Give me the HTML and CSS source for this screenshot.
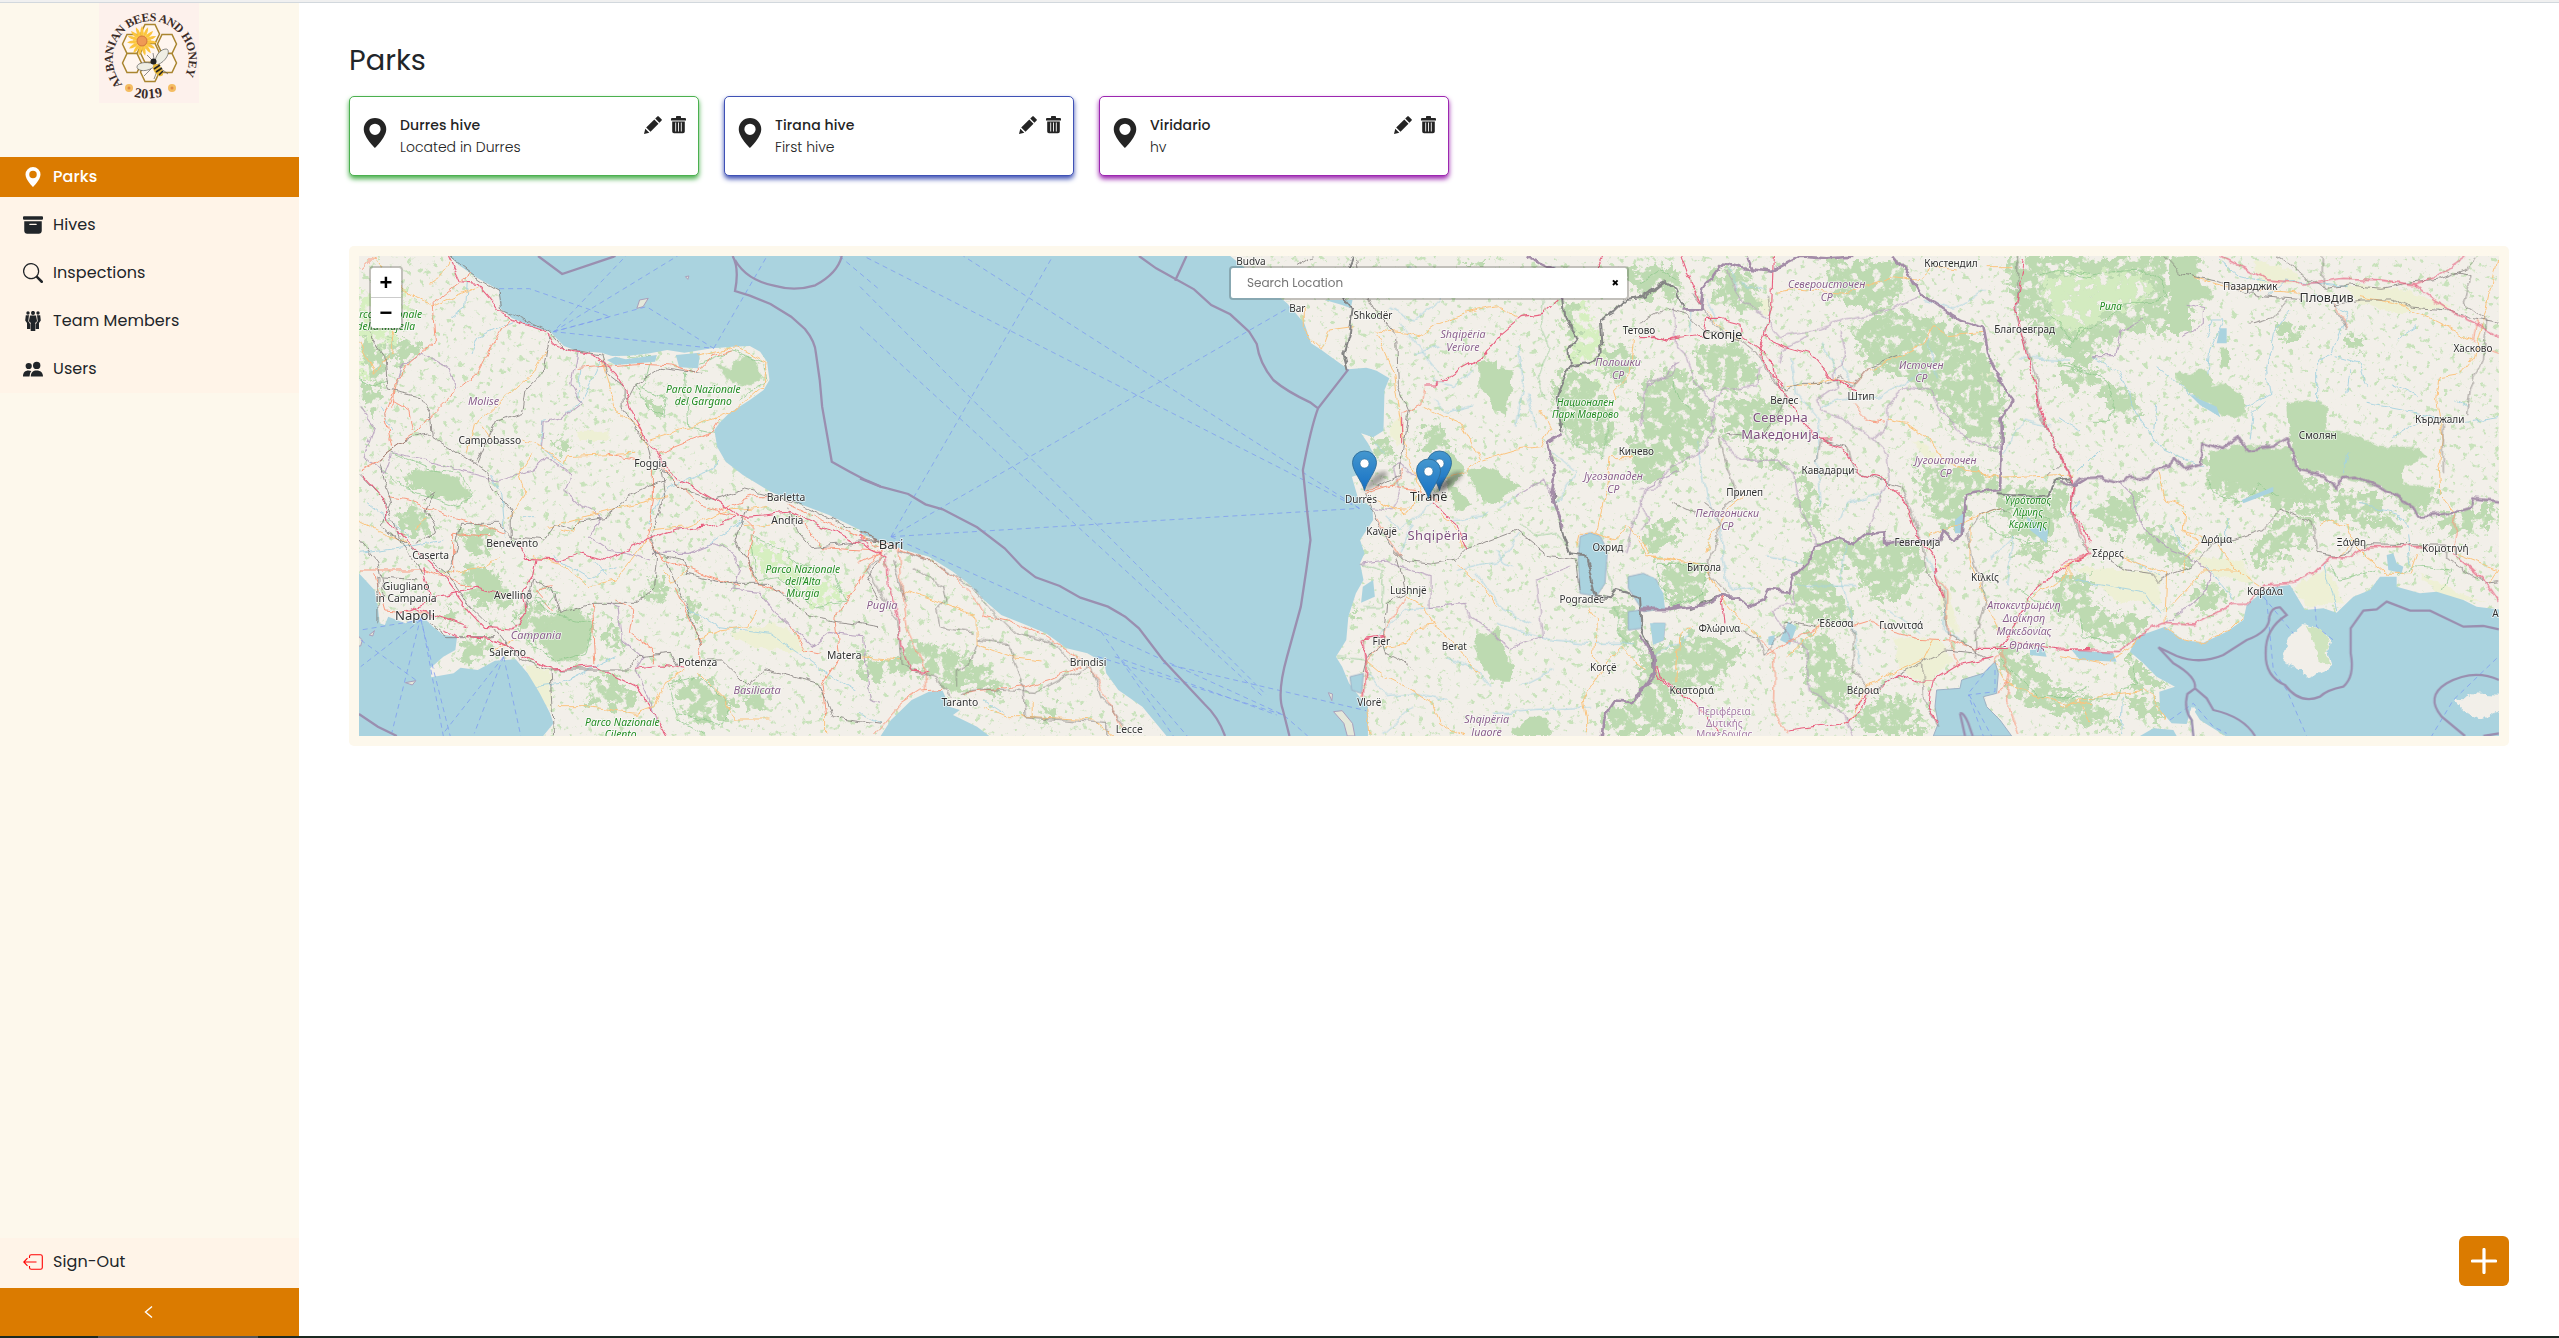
FILE: index.html
```html
<!DOCTYPE html>
<html lang="en">
<head>
<meta charset="utf-8">
<title>Parks</title>
<link rel="stylesheet" href="styles.css">
</head>
<body>
<div class="topline"></div>
<div class="app">
  <aside class="sidebar">
    <div class="brand">
      <svg class="logo" viewBox="0 0 100 100">
        <rect width="100" height="100" fill="#fdf1ec"/>
        <defs>
          <path id="ring" d="M23.500 81.500A38 38 0 1 1 86.500 71.500L78 85"/>
          <path id="ringBottom" d="M33 93Q50 98.500 70 91.500"/>
          <path id="hex" d="M-9.500 0L-5 -9.500H5L9.500 0 5 9.500H-5Z"/>
          <path id="petal" d="M0 -4Q-3 -10 0 -15Q3 -10 0 -4Z"/>
        </defs>
        <text class="logo-text"><textPath href="#ring">ALBANIAN BEES AND HONEY</textPath></text>
        <text class="logo-year"><textPath href="#ringBottom" startOffset="5%">2019</textPath></text>
        <g fill="#fff6ef" stroke="#a9852f" stroke-width="1.500">
          <use href="#hex" x="51" y="31"/><use href="#hex" x="33" y="41"/><use href="#hex" x="68" y="41"/>
          <use href="#hex" x="33" y="60"/><use href="#hex" x="68" y="60"/><use href="#hex" x="51" y="50"/><use href="#hex" x="51" y="69"/>
        </g>
        <g transform="translate(43 38)" fill="#fbc53f">
          <use href="#petal"/><use href="#petal" transform="rotate(24)"/><use href="#petal" transform="rotate(48)"/><use href="#petal" transform="rotate(72)"/><use href="#petal" transform="rotate(96)"/><use href="#petal" transform="rotate(120)"/><use href="#petal" transform="rotate(144)"/><use href="#petal" transform="rotate(168)"/><use href="#petal" transform="rotate(192)"/><use href="#petal" transform="rotate(216)"/><use href="#petal" transform="rotate(240)"/><use href="#petal" transform="rotate(264)"/><use href="#petal" transform="rotate(288)"/><use href="#petal" transform="rotate(312)"/><use href="#petal" transform="rotate(336)"/>
          <circle r="9" opacity=".8"/>
          <circle r="5" fill="#ef9a55" stroke="#c8683a" stroke-width=".8"/>
        </g>
        <g stroke="#444" stroke-width=".6" fill="#efeee4">
          <path d="M55 61C46 58 38 60 38 64S48 70 56 63Z"/><path d="M56 60C56 52 62 46 67 46S69 58 58 62Z"/>
          <path d="M48 52L53 57M54 50L55 56M60 64L69 71M52 66L45 73M58 68L55 76" fill="none"/>
        </g>
        <ellipse cx="59" cy="67" rx="4" ry="7" fill="#e8b93d" transform="rotate(-35 59 67)"/>
        <path d="M55 66L61 62M57 69L63 65M60 72L64 68" stroke="#222" stroke-width="1.600"/>
        <circle cx="54.500" cy="58.500" r="3" fill="#222"/>
        <circle cx="30" cy="85" r="4" fill="#f4bd62"/><circle cx="73" cy="85" r="4" fill="#f4bd62"/>
        <circle cx="30" cy="85" r="1.500" fill="#e08a45"/><circle cx="73" cy="85" r="1.500" fill="#e08a45"/>
      </svg>
    </div>
    <nav class="menu">
      <a class="item active"><svg viewBox="0 0 16 16"><path fill="#fff" d="M8 16s6-5.686 6-10A6 6 0 0 0 2 6c0 4.314 6 10 6 10zm0-7a3 3 0 1 1 0-6 3 3 0 0 1 0 6z"/></svg><span>Parks</span></a>
      <a class="item"><svg viewBox="0 0 16 16"><path d="M12.643 15C13.979 15 15 13.845 15 12.500V5H1v7.500C1 13.845 2.021 15 3.357 15h9.286zM5.500 7h5a.5.5 0 0 1 0 1h-5a.5.5 0 0 1 0-1zM.8 1a.8.8 0 0 0-.8.8V3a.8.8 0 0 0 .8.8h14.400A.8.8 0 0 0 16 3V1.800a.8.8 0 0 0-.8-.8H.8z"/></svg><span>Hives</span></a>
      <a class="item"><svg viewBox="0 0 16 16"><path d="M11.742 10.344a6.500 6.500 0 1 0-1.397 1.398h-.001c.03.04.062.078.098.115l3.850 3.850a1 1 0 0 0 1.415-1.414l-3.850-3.850a1.007 1.007 0 0 0-.115-.1zM12 6.500a5.500 5.500 0 1 1-11 0 5.500 5.500 0 0 1 11 0z"/></svg><span>Inspections</span></a>
      <a class="item"><svg viewBox="0 0 20 20"><circle cx="5" cy="2" r="1.700"/><circle cx="15" cy="2" r="1.700"/><path d="M2.800 4.300H6l1.400 7.700V18H4V12L2.200 9.500ZM17.200 4.300H14l-1.400 7.700V18H16V12L17.800 9.500Z"/><circle cx="10" cy="1.900" r="2"/><path d="M7 4.500H13L14 10.500 12.300 11.500V20H7.700V11.500L6 10.500Z"/><path d="M6.300 5L5.500 10 7.500 13M13.700 5L14.500 10 12.500 13" fill="none" stroke="#fff4e8" stroke-width=".7"/></svg><span>Team Members</span></a>
      <a class="item"><svg viewBox="0 0 20 20"><circle cx="5.700" cy="7" r="3.100"/><circle cx="13.700" cy="6.400" r="3.700"/><path d="M0 17.500C0 13.500 2 11.500 5.500 11.500Q7 11.500 8.300 12 6.500 14 6.500 17.500ZM7.800 17.500C8 13.300 10 11.500 13.700 11.500S20 13.500 20 17.500Z"/></svg><span>Users</span></a>
    </nav>
    <div class="signout">
      <a class="item"><svg class="exit" viewBox="0 0 20 20"><path d="M6.500 6V4.500Q6.500 2.700 8.300 2.700H17.500Q19.300 2.700 19.300 4.500V15.500Q19.300 17.300 17.500 17.300H8.300Q6.500 17.300 6.500 15.500V14M13.500 10H1M4.500 6.200L.8 10 4.500 13.800"/></svg><span>Sign-Out</span></a>
    </div>
    <button class="collapse"><svg viewBox="0 0 12 14"><path d="M9 1.500L2.500 7 9 12.500" fill="none" stroke="#fff" stroke-width="1.400"/></svg></button>
  </aside>

  <main class="main">
    <h1>Parks</h1>
    <div class="cards">
      <article class="card green-card">
        <svg class="pin" viewBox="0 0 16 16"><path d="M8 16s6-5.686 6-10A6 6 0 0 0 2 6c0 4.314 6 10 6 10zm0-7a3 3 0 1 1 0-6 3 3 0 0 1 0 6z"/></svg>
        <div class="info"><b>Durres hive</b><span>Located in Durres</span></div>
        <div class="tools"><svg viewBox="0 0 18 18"><path d="M0 18L1.300 12.700 5.300 16.700ZM2.200 11.500L10.300 3.500 14.500 7.700 6.500 15.800ZM11.200 2.600L13.400.4Q14 -.2 14.700.5L17.500 3.300Q18.200 4 17.600 4.600L15.400 6.800Z"/></svg><svg viewBox="0 0 18 18"><path d="M2 2H6V.8Q6 0 6.800 0H10.200Q11 0 11 .8V2H15Q16 2 16 3V4.500H1V3Q1 2 2 2ZM2.200 5.500H14.800V15.500Q14.800 17.300 13 17.300H4Q2.200 17.300 2.200 15.500Z"/><path d="M5.700 6.500V15.500M8.500 6.500V15.500M11.300 6.500V15.500" stroke="#fff" stroke-width=".9"/></svg></div>
      </article>
      <article class="card blue-card">
        <svg class="pin" viewBox="0 0 16 16"><path d="M8 16s6-5.686 6-10A6 6 0 0 0 2 6c0 4.314 6 10 6 10zm0-7a3 3 0 1 1 0-6 3 3 0 0 1 0 6z"/></svg>
        <div class="info"><b>Tirana hive</b><span>First hive</span></div>
        <div class="tools"><svg viewBox="0 0 18 18"><path d="M0 18L1.300 12.700 5.300 16.700ZM2.200 11.500L10.300 3.500 14.500 7.700 6.500 15.800ZM11.200 2.600L13.400.4Q14 -.2 14.700.5L17.500 3.300Q18.200 4 17.600 4.600L15.400 6.800Z"/></svg><svg viewBox="0 0 18 18"><path d="M2 2H6V.8Q6 0 6.800 0H10.200Q11 0 11 .8V2H15Q16 2 16 3V4.500H1V3Q1 2 2 2ZM2.200 5.500H14.800V15.500Q14.800 17.300 13 17.300H4Q2.200 17.300 2.200 15.500Z"/><path d="M5.700 6.500V15.500M8.500 6.500V15.500M11.300 6.500V15.500" stroke="#fff" stroke-width=".9"/></svg></div>
      </article>
      <article class="card purple-card">
        <svg class="pin" viewBox="0 0 16 16"><path d="M8 16s6-5.686 6-10A6 6 0 0 0 2 6c0 4.314 6 10 6 10zm0-7a3 3 0 1 1 0-6 3 3 0 0 1 0 6z"/></svg>
        <div class="info"><b>Viridario</b><span>hv</span></div>
        <div class="tools"><svg viewBox="0 0 18 18"><path d="M0 18L1.300 12.700 5.300 16.700ZM2.200 11.500L10.300 3.500 14.500 7.700 6.500 15.800ZM11.200 2.600L13.400.4Q14 -.2 14.700.5L17.500 3.300Q18.200 4 17.600 4.600L15.400 6.800Z"/></svg><svg viewBox="0 0 18 18"><path d="M2 2H6V.8Q6 0 6.800 0H10.200Q11 0 11 .8V2H15Q16 2 16 3V4.500H1V3Q1 2 2 2ZM2.200 5.500H14.800V15.500Q14.800 17.300 13 17.300H4Q2.200 17.300 2.200 15.500Z"/><path d="M5.700 6.500V15.500M8.500 6.500V15.500M11.300 6.500V15.500" stroke="#fff" stroke-width=".9"/></svg></div>
      </article>
    </div>

    <section class="mapbox">
      <svg class="map" viewBox="359 256 2140 480">
        <defs>
          <filter id="rough" filterUnits="userSpaceOnUse" x="340" y="240" width="2180" height="510" color-interpolation-filters="sRGB">
            <feTurbulence type="fractalNoise" baseFrequency=".12" numOctaves="3" seed="4"/>
            <feDisplacementMap in="SourceGraphic" scale="8" xChannelSelector="R" yChannelSelector="G"/>
          </filter>
          <filter id="wood" filterUnits="userSpaceOnUse" x="340" y="240" width="2180" height="510" color-interpolation-filters="sRGB">
            <feTurbulence type="fractalNoise" baseFrequency=".11" numOctaves="5" seed="8" result="n"/>
            <feDisplacementMap in="SourceGraphic" in2="n" scale="30" xChannelSelector="G" yChannelSelector="B" result="d"/>
            <feColorMatrix in="n" values="0 0 0 0 0 0 0 0 0 0 0 0 0 0 0 9 0 0 0 -3.100" result="m"/>
            <feComposite in="d" in2="m" operator="in"/>
          </filter>
          <filter id="sparse" filterUnits="userSpaceOnUse" x="340" y="240" width="2180" height="510" color-interpolation-filters="sRGB">
            <feTurbulence type="fractalNoise" baseFrequency=".16" numOctaves="4" seed="21" result="n"/>
            <feColorMatrix in="n" values="0 0 0 0 0 0 0 0 0 0 0 0 0 0 0 9 0 0 0 -5.550" result="m"/>
            <feComposite in="SourceGraphic" in2="m" operator="in"/>
          </filter>
          <filter id="wiggle" filterUnits="userSpaceOnUse" x="340" y="240" width="2180" height="510" color-interpolation-filters="sRGB">
            <feTurbulence type="fractalNoise" baseFrequency=".07" numOctaves="3" seed="2"/>
            <feDisplacementMap in="SourceGraphic" scale="8" xChannelSelector="R" yChannelSelector="G"/>
          </filter>
          <filter id="blur"><feGaussianBlur stdDeviation="2"/></filter>
          <linearGradient id="mk" x1="0" y1="0" x2="0" y2="1"><stop offset="0" stop-color="#4497cf"/><stop offset="1" stop-color="#1670c4"/></linearGradient>
          <g id="marker">
            <path d="M-1 0C6 -14 14 -20 21 -19C26 -17 20 -8 1 0Z" fill="#222" opacity=".38" filter="url(#blur)"/>
            <path d="M0 0C-2 -9 -12 -19 -12 -28A12 11.500 0 0 1 12 -28C12 -19 2 -9 0 0Z" fill="url(#mk)" stroke="#2e6c97" stroke-width=".9"/>
            <circle cy="-27" r="4.500" fill="#fff" stroke="#2e6c97" stroke-width=".6"/>
          </g>
        </defs>
        <rect x="359" y="256" width="2140" height="480" fill="#f2efe9"/>

        <!-- scattered vegetation -->
        <g filter="url(#sparse)" fill="#c8e2bb"><rect x="359" y="256" width="2140" height="480"/></g>

        <!-- farmland tints -->
        <g fill="#eef0d5" filter="url(#rough)">
          <g transform="translate(340 240) scale(.34439 .33333)"><path d="M540 1270L610 1290 615 1420 560 1340ZM1130 1180L1260 1150 1330 1190 1350 1240 1200 1220ZM690 575H780V600H690Z"/></g>
          <g transform="translate(1200 240) scale(.33333)"><path d="M565 570L605 520 610 600 590 625ZM460 390L520 400 560 450 520 430Z"/></g>
          <g transform="translate(1640 240) scale(.33333)"><path d="M760 1190L900 1200 940 1260 860 1340 780 1290ZM880 1000L930 1060 960 1180 920 1150ZM1010 340L1060 400 1060 440 1000 380ZM820 600L890 640 870 680ZM320 170L400 180 380 230Z"/></g>
          <g transform="translate(2060 240) scale(.33333)"><path d="M580 60L700 90 720 130 600 130ZM860 130L1040 150 1180 200 1000 220 880 180ZM50 980L300 1000 300 1090 160 1080ZM400 950L540 960 580 1030 440 1000ZM700 1040L800 980 850 1090 740 1100ZM1080 1000L1200 1060 1280 1090 1140 1070Z"/></g>
        </g>

        <!-- pale protected uplands -->
        <g fill="#d6efc0" filter="url(#wood)">
          <g transform="translate(340 240) scale(.34439 .33333)"><path d="M55 150L160 120 210 200 160 300 130 340 60 430ZM1190 900L1280 930 1320 980 1400 1020 1480 1060 1380 1100 1260 1000 1210 1010Z"/></g>
          <g transform="translate(1200 240) scale(.33333)"><path d="M1090 200L1150 190 1180 260 1230 330 1200 380 1110 360ZM1100 400L1200 420 1190 480 1090 470Z"/></g>
        </g>

        <!-- woodland -->
        <g fill="#bddab1" filter="url(#wood)">
          <g transform="translate(340 240) scale(.34439 .33333)">
            <path d="M55 420L120 470 100 540 70 500ZM140 300L220 290 240 340 180 370 130 350ZM190 700L260 690 370 760 340 790 210 740ZM60 280L130 310 140 400 120 450 70 400ZM170 800L250 810 280 850 240 900 170 860ZM350 870L430 860 440 950 370 940ZM350 990L430 980 490 1050 480 1110 380 1080ZM520 1110L560 1090 640 1120 700 1110 735 1150 700 1250 620 1250 520 1180ZM720 1320L800 1310 870 1370 830 1410 730 1390ZM900 1010L950 1020 940 1090 880 1080ZM960 1320L1060 1310 1150 1400 1110 1450 1000 1430ZM1160 1340L1240 1330 1260 1400 1190 1410ZM990 1060L1050 1110 1040 1170 1000 1130ZM780 1150L820 1180 830 1230 770 1210ZM350 1200L440 1200 420 1260 350 1270ZM600 590L670 600 650 640 620 630ZM890 480L940 490 940 530 900 520ZM290 1110L340 1120 330 1160 290 1150ZM1500 1230L1568 1270 1568 1330 1520 1310Z"/>
          </g>
          <g transform="translate(860 240) scale(.34439 .33333)"><path d="M10 1260L120 1250 130 1200 260 1220 330 1270 390 1290 410 1380 340 1330 280 1360 230 1310 140 1290 60 1320 10 1310ZM520 1390L570 1400 570 1450 530 1440ZM1480 590L1520 600 1540 670 1510 640Z"/></g>
          <g transform="translate(1200 240) scale(.33333)">
            <path d="M680 560L710 540 760 610 740 640 650 610ZM1050 440L1110 380 1180 420 1240 540 1230 640 1170 620 1100 580ZM1080 180L1130 190 1140 330 1110 320ZM1200 330L1300 320 1290 420 1240 450ZM1270 100L1420 60 1440 130 1330 160ZM1240 1080L1300 1090 1330 1230 1280 1220ZM1210 1400L1300 1380 1440 1330 1440 1488 1220 1488ZM500 590L560 600 590 660 550 640ZM440 1130L475 1100 465 1150ZM1300 500L1440 540 1440 700 1310 740 1290 660ZM1320 860L1440 830 1440 900 1340 950ZM780 60L870 60 840 90Z"/>
          </g>
          <g transform="translate(1640 240) scale(.33333)">
            <path d="M0 110L110 80 120 200 60 150 0 200ZM160 330L290 300 360 380 330 440 240 460 160 400ZM0 430L110 380 200 470 220 570 180 620 90 680 0 650ZM200 100L310 90 370 200 310 220 230 170ZM560 60L790 60 810 140 720 220 600 190 560 120ZM620 260L760 210 900 240 1030 300 1060 400 1090 460 1080 620 1000 610 930 540 880 460 800 420 680 380ZM250 480L400 470 440 520 330 600 260 600ZM300 620L420 650 460 690 400 690ZM470 680L520 740 560 830 540 880 500 880 480 800ZM830 680L1080 700 1070 750 980 760 980 850 920 880 840 760ZM1100 50H1350V400L1260 350 1150 230 1110 160ZM510 920L650 890 840 910 850 1000 780 1080 690 1080 660 1000 600 950 560 1020 640 1120 530 1150 440 1110 470 1000ZM480 1190L560 1180 620 1250 630 1400 530 1400 490 1300ZM650 1420L720 1360 820 1370 850 1488 640 1488ZM0 1250L140 1180 320 1230 220 1330 140 1340 60 1400 0 1488ZM1060 1220L1160 1240 1240 1340 1350 1370 1350 1440 1140 1390ZM40 970L190 970 200 1080 100 1100ZM1040 740L1290 730 1280 800 1220 910 1120 880ZM1100 940L1180 900 1250 920 1200 960ZM1220 1040L1350 1000V1160L1240 1120ZM1000 830L1050 840 1060 870Z"/>
          </g>
          <g transform="translate(2060 240) scale(.33333)">
            <path d="M0 50H410L420 130 380 270 270 270 180 290 70 360 0 330ZM0 380L120 400 170 450 200 430 240 500 230 560 150 520 120 440 0 440ZM100 790L250 760 240 830 180 900 110 850ZM230 880L310 850 400 970 360 980 260 930ZM440 640L560 640 690 610 720 700 830 750 960 760 980 810 880 860 820 800 800 840 700 800 620 870 560 960 600 980 760 900 750 830 660 810 560 760 520 790 440 740ZM0 1010L60 1050 140 1120 270 1130 260 1180 180 1210 80 1180 0 1100ZM200 1240L260 1290 330 1340 220 1350ZM10 1390L110 1390 190 1460 60 1450ZM200 1370L280 1360 320 1440 230 1430ZM990 770L1120 760 1140 790 1060 820ZM880 840L1010 830 1040 870 920 880ZM1100 840L1317 790V850L1200 880ZM380 1070L460 1030 510 1070 440 1120ZM650 250L720 260 740 300 660 300ZM860 280L910 300 910 340 870 330Z"/>
          </g>
        </g>
        <g fill="#d3ebc0" filter="url(#wood)"><g transform="translate(2060 240) scale(.33333)"><path d="M-60 100L240 100 290 150 240 190 110 240 30 290 -30 240Z"/></g></g>
        <g fill="#bddab1" filter="url(#rough)">
          <g transform="translate(1200 240) scale(.33333)"><path d="M838 370L888 358 888 385 938 388 935 450 920 490 918 528 880 510 868 470 838 445ZM720 640L745 630 795 690 760 740 820 790 765 820 750 760ZM800 695L845 680 900 700 965 740 915 765 905 790 845 780 830 745ZM830 1190L900 1170 910 1240 945 1280 930 1325 880 1325 835 1260 820 1210ZM940 1470L990 1430 1035 1430 1055 1470 1050 1488H940Z"/></g>
          <g transform="translate(2060 240) scale(.33333)"><path d="M345 400L355 390 385 408 420 388 450 400 455 440 495 430 550 465 555 520 520 535 480 525 440 490 400 470 370 440ZM685 490L740 480 800 495 800 570 870 580 960 620 1080 625 1100 650 1030 680 1030 730 1120 740 1115 780 1060 800 960 740 830 710 790 700 720 690 690 600ZM482 325H507V380H482ZM380 50H412V120L455 150V180H390V275H330V50ZM450 640L540 610 640 630 680 620 720 700 740 780 640 770 560 740 450 700Z"/></g>
          <g transform="translate(340 240) scale(.34439 .33333)"><path d="M640 1120L675 1105 735 1150 715 1240 670 1265 620 1260 580 1180ZM190 700L260 690 340 710 380 765 340 780 215 740ZM1090 370L1130 385 1180 340 1210 370 1225 410 1190 440 1140 430 1110 400ZM380 985L430 990 480 1050 470 1080 400 1050Z"/></g>
        </g>

        <!-- protected area outlines -->
        <g class="park" filter="url(#wiggle)">
          <g transform="translate(340 240) scale(.34439 .33333)"><path d="M800 345L900 350 880 450 950 480 940 530 890 500 860 430M1000 400L1010 560 1100 580M1040 370L1140 330 1230 370 1240 420 1160 480M150 640L260 690 350 700 385 770 340 800 200 750 110 680M1190 890L1210 1020 1270 1010 1380 1100 1470 1080 1440 1010 1330 970 1280 930ZM500 1140L560 1080 640 1130 735 1150 710 1240 630 1265 560 1220ZM950 1330L1040 1310 1140 1400 1100 1450 980 1420ZM55 420L100 440 140 420M980 1440L1060 1488M590 1040L630 1060 610 1090 560 1070Z"/></g>
          <g transform="translate(1200 240) scale(.33333)"><path d="M1030 180L1020 260 1050 330 1010 420 1040 480M1075 480L1100 600 1210 650 1230 560M960 850L1010 890 1070 880 1110 920M480 970L550 990 545 1100 490 1100M410 1250L500 1260 510 1300 460 1320M1110 1100L1250 1100 1260 1190 1330 1240M1220 960L1240 1060"/></g>
          <g transform="translate(1640 240) scale(.33333)"><path d="M0 130L60 90 110 120M1190 110L1260 90 1350 100M1220 210L1260 260 1300 310 1340 260M1260 380L1350 400M95 420L120 490 150 510M1040 820L1130 800 1230 840 1220 900 1160 910 1040 860ZM1080 1260L1200 1370 1290 1370 1350 1340M50 970L200 970 190 1060 100 1100 60 1040ZM1140 1050L1230 1110"/></g>
          <g transform="translate(2060 240) scale(.33333)"><path d="M0 95L90 110 160 95 240 90 310 120 320 170 270 190 200 190 120 250 60 270 30 320 0 300M0 370L70 390 140 420 160 490 150 550 80 550M440 720L460 760 550 790 600 730 650 770M810 970L840 1020 950 990M1010 1010L1060 980 1170 990 1150 1055M60 1130L70 1190 180 1210M210 1240L230 1330 180 1350 170 1380 0 1370"/></g>
        </g>

        <!-- rivers -->
        <g class="river" filter="url(#wiggle)">
          <g transform="translate(340 240) scale(.34439 .33333)"><path d="M370 120L365 200 320 235M500 245L400 290 380 340M760 360L710 470 660 520M590 540L580 620 650 680M80 790L160 850 200 900M1100 660L1080 690 950 740 890 850M1170 840L1060 920M620 950L720 1010 800 980M1000 1100L1100 1160 1250 1180 1400 1290 1500 1350M480 890L470 760 440 700M60 940L200 920 300 900M560 1340L640 1330 800 1250M740 960L780 1010M700 380L690 470M120 500L150 570M530 830L570 830"/></g>
          <g transform="translate(860 240) scale(.34439 .33333)"><path d="M0 1420L60 1450M360 1380L420 1420"/></g>
          <g transform="translate(1200 240) scale(.33333)"><path d="M570 200L640 240 700 200 760 110 840 150 960 130 1060 80M700 420L760 440 820 390M700 480L740 520 820 500M950 320L970 420 950 560M980 460L1010 560M640 340L720 320M720 400L640 300 600 250M520 610L560 640M560 830L600 870 700 790M760 840L870 820M640 850L600 940M890 930L910 970 940 980M830 1000L900 1100 990 1150M890 1150L1060 1200 1170 1210M700 1100L620 1110 530 1190M770 990L900 960 960 880M900 800L960 760M500 1300L560 1370 650 1360 740 1380M740 1250L830 1290 870 1340M960 1340L1060 1290M1060 800L1130 700 1050 630M620 80L700 150 900 160M550 1480L640 1400M880 1420L1170 1400M1180 1210L1300 1210"/></g>
          <g transform="translate(1640 240) scale(.33333)"><path d="M170 600L200 780 240 850 250 960 270 1050 340 1040M270 80L290 150M450 350L470 460 540 540 530 640 540 800M540 500L600 480 720 470 850 400M860 290L890 420M640 440L600 360M730 760L620 790 600 840M860 950L920 1060 910 1170 960 1200M620 900L600 1020 630 1110 660 1270M470 1035L650 1040M740 1110L840 1180M1090 640L1150 540 1230 560M1140 350L1290 360M850 180L940 210 1040 150M550 310L590 400M1050 960L1120 890 1100 1030M380 950L480 970M40 1250L150 1190M160 200L150 280M200 180L230 240M300 130L380 150"/></g>
          <g transform="translate(2060 240) scale(.33333)"><path d="M0 530L60 570M100 350L180 400 240 540 300 620 430 680M290 380L330 410 480 530M290 490L280 580M620 480L580 520 570 600M690 210L640 280 620 390 630 460 560 500M770 490L770 360 820 340 860 220 760 160M630 170L680 120 860 140M830 350L900 370 920 440M1010 300L1070 260M920 490L1080 520 1170 550 1317 530M990 430L1070 470M1000 590L1090 540M1180 480L1220 500M870 390L860 460M1040 860L1010 820 900 790M1040 880L1050 980M790 970L830 1110M500 840L500 910M330 850L370 930M220 960L300 1010M440 980L520 1080M40 1020L260 1060 300 1120M190 1370L185 1488M50 700L120 630M860 640L850 700M440 400L450 330 490 240 460 240 440 290M60 780L20 830M480 60L540 110 620 130"/></g>
        </g>

        <!-- seas and lakes -->
        <g fill="#aad3df" stroke="#9db0c4" stroke-width="1">
          <g transform="translate(340 240) scale(.34439 .33333)" stroke="none">
            <path d="M318 48L345 75 400 115 462 150 465 205 500 235 560 260 610 275 650 318 690 333 760 338 790 348 840 347 900 340 950 330 1000 338 1080 325 1140 320 1190 318 1220 335 1240 365 1247 420 1230 450 1190 480 1130 520 1105 545 1087 570 1095 620 1120 665 1170 705 1250 755 1330 790 1420 825 1500 865 1570 898V48Z"/>
            <path d="M55 1000L100 1050 110 1100 115 1150 130 1155 140 1130 190 1150 240 1130 270 1160 300 1185 340 1190 335 1230 300 1250 262 1285 265 1312 330 1300 350 1283 400 1290 450 1262 510 1258 545 1300 580 1360 610 1420 620 1450 590 1488H55Z"/>
            <path d="M775 360L800 350 830 358 920 345 915 365 800 375ZM975 345L1045 338 1040 385 985 382Z"/>
          </g>
          <g transform="translate(860 240) scale(.34439 .33333)" stroke="none">
            <path d="M0 880L60 905 130 930 200 950 270 995 320 1035 360 1080 410 1125 470 1150 540 1180 600 1225 660 1240 710 1270 715 1300 750 1350 820 1400 890 1488H1475L1475 1400 1450 1370 1420 1330 1400 1280 1382 1250 1412 1200 1418 1130 1440 1060 1462 1020 1452 970 1465 940 1452 900 1490 840 1488 805 1445 770 1428 710 1445 705 1480 695 1490 640 1475 610 1455 580 1490 592 1520 572 1523 450 1537 415 1500 392 1470 383 1418 388 1380 360 1340 330 1310 310 1290 250 1240 190 1160 120 1075 48H0Z"/>
            <path d="M60 1488L90 1440 150 1380 200 1355 240 1352 260 1400 290 1410 270 1425 340 1460 375 1488Z"/>
            <path d="M1350 180H1430L1425 205 1400 195ZM1460 1040L1490 1020 1495 1070 1455 1088Z"/>
          </g>
          <g transform="translate(1200 240) scale(.33333)"><path d="M1140 890L1170 878 1200 888 1222 930 1215 1030 1190 1068 1140 1060 1135 960ZM1285 1010L1330 1000 1370 1020 1392 1105 1330 1115 1285 1045ZM1285 1115L1320 1110 1325 1165 1285 1170ZM1360 1150L1395 1150 1390 1200 1360 1210ZM450 1310L490 1300 485 1360 455 1350Z"/></g>
          <g transform="translate(1640 240) scale(.33333)"><path stroke="none" d="M0 1005L40 1012 70 1060 75 1108H0ZM30 1150L75 1150 70 1200 40 1215ZM420 1200L445 1145 470 1160 450 1215ZM385 1190L405 1185 400 1215 385 1215ZM945 840L975 815 970 880 945 880ZM1160 830L1225 870 1220 910 1170 870ZM1170 1230L1210 1220 1220 1250 1170 1245Z"/><path d="M1065 1265L1030 1300 965 1320 960 1345 890 1350 885 1400 895 1450 880 1488H1115L1080 1440 1040 1400 1030 1370 1070 1360 1075 1300Z"/></g>
          <g transform="translate(2060 240) scale(.33333)" stroke="none"><path d="M600 1052L650 1040 690 1035 735 1110 790 1105 830 1118 880 1070 930 1050 960 1010 1010 1010 1010 1040 1080 1060 1130 1055 1210 1080 1250 1100 1330 1110V1490H500L420 1440 395 1400 380 1452 335 1450 300 1410 298 1355 345 1340 290 1310 250 1270 210 1235 230 1190 260 1180 315 1160 370 1200 430 1208 500 1175 550 1140 560 1095 590 1070ZM980 945L1000 940 1010 970 1030 980 1025 1000 985 990ZM35 1230L160 1240 170 1265 60 1260ZM240 1488L280 1465 340 1470 350 1488ZM480 265L500 265 500 310 470 310ZM390 465L470 500 480 530 420 495ZM545 780L640 740 640 755 550 790Z"/></g>
        </g>
        <g fill="#e4e8da" stroke="#a99fbb" stroke-width="1">
          <g transform="translate(340 240) scale(.34439 .33333)"><path d="M862 205L870 180 895 175 880 200ZM1003 110L1013 108 1010 118ZM190 1328L220 1322 210 1335ZM85 1185L100 1172 95 1188ZM55 1190L65 1200 60 1218 50 1218Z"/></g>
          <g transform="translate(860 240) scale(.34439 .33333)"><path d="M1360 1358L1372 1362 1370 1382ZM1375 1415L1400 1412 1430 1450 1437 1488H1415L1405 1450Z"/></g>
        </g>
        <g fill="#f2efe9" filter="url(#rough)">
          <g transform="translate(2060 240) scale(.33333)"><path d="M670 1250L690 1190 730 1155 770 1160 815 1195 805 1230 815 1280 740 1312 700 1280 672 1270ZM1184 1385L1240 1360 1330 1365V1410L1255 1440 1210 1410ZM390 1410L400 1400 420 1488H398Z"/><path d="M740 1160L770 1160 810 1195 800 1240 810 1275 780 1270 760 1200Z" fill="#cfe4bf"/></g>
        </g>

        <!-- ferries -->
        <g class="ferry">
          <g transform="translate(340 240) scale(.34439 .33333)"><path d="M462 146L550 146 785 230 620 275 830 48M620 275L980 48M620 275L890 200 1085 325 620 275M1085 325L1240 48M1450 48L1568 150M235 1130L150 1480M235 1130L300 1488M235 1140L320 1488M235 1140L60 1170M235 1140L60 1280M475 1250L390 1480M475 1250L525 1488M475 1250L300 1480M60 1200L220 1320"/></g>
          <g transform="translate(860 240) scale(.34439 .33333)"><path d="M90 890L560 48M90 890L1250 200M90 890L1450 805 10 48M1450 805L300 48M0 140L1180 1365M0 260L1170 1370M90 890L700 1175 1230 1425 1300 1488M700 1175L910 1488M760 1260L950 1488M690 1250L1230 1425M740 1250L1210 1425M880 1270L1470 1412"/></g>
          <g transform="translate(1640 240) scale(.33333)"><path d="M1065 1290V1355L985 1365 1030 1488M1050 1280L985 1360 1055 1488"/></g>
          <g transform="translate(2060 240) scale(.33333)"><path d="M610 1070L700 1180M620 1080L640 1290 680 1350 740 1488M765 1100L770 1160 820 1200M1310 1255L1180 1380 1115 1488M330 1440L400 1390 460 1460 500 1480"/></g>
        </g>

        <!-- regional boundaries -->
        <g class="region" filter="url(#wiggle)">
          <g transform="translate(340 240) scale(.34439 .33333)"><path d="M55 500L100 560 70 650 130 700 150 640 240 660 390 700 460 720 560 690 600 650 670 700 650 750 700 800 760 830 725 890 780 930 840 940 900 960M165 430L180 380 240 340 310 380 340 450M690 330L670 430 700 490 640 540 590 550 585 625M910 940L1010 940 1080 910 1150 940 1160 990 1140 1050 1220 1060 1260 1110 1310 1160 1370 1220 1420 1180 1520 1190 1530 1300 1540 1380 1568 1390M780 1090L810 1100 820 1200 880 1250 860 1290 900 1380 920 1450"/></g>
          <g transform="translate(1200 240) scale(.33333)"><path d="M480 970L560 960 600 980 690 1010 690 1100 800 1090 810 1130 870 1170 920 1220 1030 1190 1010 1020 1110 980M520 800L570 810 600 760 580 680 600 670 640 710 730 740M950 770L1030 720 1060 760M1280 940L1300 850 1340 740 1440 690M1340 440L1380 420 1420 380 1440 370"/></g>
          <g transform="translate(1640 240) scale(.33333)"><path d="M0 560L20 430 100 400 110 370M100 200L110 320 140 350 160 420 220 490 220 570 190 630 80 690 60 740 0 750M220 490L250 450 350 440 360 380M260 90L300 180 370 230 420 290 540 270 620 240 760 210 800 190 830 170M420 370L430 330 500 290M600 270L620 350 580 400 590 440 530 480 540 510 600 530 700 600 740 640 750 720 720 770 700 840 680 880M700 600L740 560 740 500 800 440 870 450 910 520 950 570 1000 610 1080 625M250 600L300 660 410 660 460 700 480 800 530 910M460 1050L460 1090 400 1110 450 1200 500 1220 510 1350 610 1420 640 1488M0 780L30 850 0 870"/></g>
          <g transform="translate(2060 240) scale(.33333)"><path d="M180 730L230 780 240 850 310 920 410 960 450 1000 440 1050 390 1100 320 1150M100 350L160 350 180 280 250 240M380 190L430 200 430 250 390 280 370 290"/></g>
        </g>

        <!-- secondary roads -->
        <g class="road yellow" filter="url(#wiggle)">
          <g transform="translate(340 240) scale(.34439 .33333)"><path d="M95 48L140 110 190 150 270 200 400 140M260 130L290 110 320 60M600 330L560 400 470 480 430 520 390 550 370 640M760 360L800 510 870 560 890 620M410 560L440 600M530 600L580 620 650 670 660 650 860 640M490 840L540 760 520 700 560 640M560 950L640 970 720 1040 800 1020 890 900M950 770L820 800 600 860M890 870L1010 860 1130 810 1240 800M1010 990L960 1030 940 990M1170 860L1270 850M1030 1200L1100 1170 1180 1160 1210 1110M450 1230L520 1190M630 1400L720 1400 860 1420 910 1400 940 1330 1000 1290M1040 1300L1120 1380 1150 1440 1250 1440M55 840L110 870 210 920M640 870L680 880 700 830M900 600L1020 560 1080 540 1150 510 1230 440 1240 370 1150 320 1040 345M1410 1430L1410 1480M300 1000L420 980 470 950M220 870L250 830M60 310L100 400 150 340 170 180"/></g>
          <g transform="translate(860 240) scale(.34439 .33333)"><path d="M0 1250L120 1260M120 1050L210 1080 340 1130 340 1210M340 1210L440 1250 530 1260M360 1400L430 1430 500 1430 500 1380M500 1430L680 1440 740 1490M1290 200L1290 280 1340 330 1360 270 1430 260"/></g>
          <g transform="translate(1200 240) scale(.33333)"><path d="M530 270L620 280 660 290 720 250 830 210 890 200 950 230M530 280L580 400 590 470 610 600 640 700 660 750M670 500L730 530 780 550 810 600 840 660 790 700 720 720M850 660L950 630 1020 620 1050 570 1020 510M520 780L580 810 620 810M540 790L620 820 660 760M720 820L760 850 790 920M770 970L850 1040 890 1100M620 1070L670 1100 700 1160 750 1190 800 1260 840 1310M560 1220L620 1210 660 1160 700 1155M1160 1100L1190 1140 1180 1250 1210 1290 1150 1380 1160 1440 1160 1488M1210 1280L1260 1220 1300 1260 1340 1290M500 1260L560 1310 620 1340 700 1390 720 1450 790 1488M500 1400L510 1488M1130 920L1140 880 1190 880 1220 740 1230 650 1300 650M1190 880L1240 900 1280 850 1310 890 1340 950 1440 960M1250 480L1240 450 1290 400 1300 300"/></g>
          <g transform="translate(1640 240) scale(.33333)"><path d="M200 210L240 260 300 300M410 160L460 150 620 160 760 110 830 120 880 80 950 90M1040 80H1120M440 440L540 430 590 410M690 390L760 360 850 310 880 260 930 290 1030 280M740 540L800 550 870 600 910 660 980 690 1080 715 1300 705M200 940L210 900 260 810 310 770M0 890L30 950 130 960 200 980 240 1060M240 1070L290 1130 360 1190M110 1330L120 1180 160 1160M540 1160L440 1250M870 890L1000 830 1080 800M990 850L990 960 1040 1090 1080 1180M630 1440L680 1340 750 1300 850 1260 880 1200M1350 940L1290 970 1270 1020 1200 1050 1160 1100M1070 1270L1100 1330 1200 1370 1280 1390 1350 1390M620 1440L600 1450"/></g>
          <g transform="translate(2060 240) scale(.33333)"><path d="M400 110L500 140 720 160M900 170L1000 190 1120 240 1240 300M1310 60L1270 240 1240 350 1200 400 1140 410 1130 480 1150 600 1135 690 1140 760 1180 810M295 690L320 780 375 800 370 870 460 900 540 1000 600 1040M370 870L420 910 370 960 370 1000M190 950L320 1000 315 1150M540 990L430 990 340 1090M780 860L810 845 860 860 880 910 840 950M870 900L920 950 980 1000 1050 1000 1070 940M1190 940L1317 990 1290 1030M315 1160L370 1200 430 1208 510 1170 550 1130M0 1250L140 1270 220 1220 240 1180M0 1400L60 1380 180 1360 260 1350 300 1400 320 1440M60 1380L90 1450M0 980L30 970 30 1010"/></g>
        </g>
        <g class="road orange" filter="url(#wiggle)">
          <g transform="translate(340 240) scale(.34439 .33333)"><path d="M60 90L100 48M270 190L280 300 200 370 160 430 150 500M270 190L380 100M490 240L440 320 400 400 330 460 270 520 230 570 110 660 60 690M150 480L200 510 210 570M160 440L130 520 150 620M690 385L880 370 960 375 1030 400 1080 345 1140 330M780 640L860 660M920 640L1080 575 1100 540M910 690L910 780 890 890M930 680L1050 800 1150 830M1100 810L1200 770 1240 770M1300 790L1400 840 1568 920M1170 830L1200 860 1180 960 1210 1030 1290 1060M890 890L940 960 1160 1040M55 990L240 990 380 1040M100 1000L130 1110 250 1120M140 770L200 780 320 830 400 850 480 880M730 1090L740 1270M800 1080L850 1110 840 1180 910 1230 910 1270M970 1040L1050 1210 1040 1270M1330 830L1400 920 1560 930M1568 930L1490 1050 1440 1130 1450 1250 1400 1330 1410 1430M1310 1160L1350 1230 1400 1240M440 890L330 880 330 1000M620 1040L570 1050 620 1110M1568 930L1568 970"/></g>
          <g transform="translate(860 240) scale(.34439 .33333)"><path d="M0 880L120 930 200 960 270 1010 330 1070 360 1125 430 1140 540 1190 640 1260 680 1300 720 1390 760 1460M110 920L120 1040 135 1170 190 1290 190 1350M300 1360L480 1340 550 1320 640 1280M40 1488L120 1390 180 1350 240 1345M0 970L60 940M1470 750L1550 735 1568 710"/></g>
          <g transform="translate(1200 240) scale(.33333)"><path d="M590 740L660 750 720 790M670 440L665 495 610 520M500 760L580 735 610 690M620 1070L560 1160 550 1200 500 1260 490 1370M600 950L580 920 530 830"/></g>
          <g transform="translate(1640 240) scale(.33333)"><path d="M440 1480L400 1400 405 1250 360 1200M380 1240L480 1190 540 1160M640 1160L690 1145 740 1170 830 1195 930 1200 1010 1230M890 1010L920 1050 920 1150 950 1280M1080 1240L1110 1300 1100 1380 1140 1488M640 490L680 540 730 550M590 420L650 430 690 380M1085 1230L1060 1270M1110 1330L1070 1360"/></g>
          <g transform="translate(2060 240) scale(.33333)"><path d="M820 190L860 260M1240 310L1250 240M1180 810L1190 870 1180 930M1317 340L1260 320"/></g>
        </g>
        <!-- railways and motorways -->
        <g class="road rail" filter="url(#wiggle)">
          <g transform="translate(340 240) scale(.34439 .33333)"><path d="M318 48L400 115 462 155 470 210 610 275 650 325 760 345 775 400 825 440 825 510 890 610 900 660 1000 750 1090 780 1180 750 1330 790 1568 905M830 480L850 440 930 385 1050 400M930 690L940 770 900 890 920 940 910 1050 860 1090 730 1090 640 1120 620 1050 560 1020 540 1100M940 720L840 770 770 830 700 840 680 870 620 850 590 900 500 890 460 850 350 850 330 960 310 1000M500 900L500 820 440 740 430 700 390 670 250 580 190 600 110 660 150 790 120 860 170 900 260 960 310 1000 370 1090 440 1160 500 1240 600 1290 740 1290 840 1290 870 1250 960 1240 980 1280M55 700L130 780 150 830 180 920 240 1000M140 450L230 470 260 520 265 590M75 270L130 350 140 450M410 640L390 670M400 670L450 550 530 520 540 450 590 400 600 330 610 290M240 780L280 760 250 810 280 870 220 910M610 1290L620 1488M1050 1260L1110 1260 1180 1330 1240 1290 1390 1330 1430 1430 1568 1450M950 970L1010 1110 1050 1220M910 940L1000 960 1010 1000 1130 1030 1240 1030 1370 1130 1568 1160M1300 800L1320 860 1370 920 1568 900M1210 1020L1150 900 1180 800M1568 960L1530 1010 1568 1080M260 1150L310 1190 450 1190M110 1150V1010L230 1020M55 900L110 970 130 1070"/></g>
          <g transform="translate(860 240) scale(.34439 .33333)"><path d="M0 880L60 905M110 930L200 960 320 1040 380 1110 450 1180 560 1210 610 1270M75 940L20 990 60 1060 110 1140 120 1280 220 1310 260 1370M155 985L240 1040 250 1080 220 1110 230 1160 330 1180M340 1200L430 1210 470 1320 480 1430 720 1450 720 1488M290 1360L360 1350 510 1360 600 1310 670 1280 700 1370 760 1450M340 1210L320 1270 280 1290 280 1340M95 960L120 1050 130 1080"/></g>
          <g transform="translate(1200 240) scale(.33333)"><path d="M470 60L480 120 530 220 590 290 595 440 625 510 605 650 600 700 530 740M500 760L530 840 580 930 610 960 700 970 770 960 800 930 870 900 950 870 1050 950 1130 960 1140 1050M590 950L620 1060 560 1090 550 1200 560 1240 600 1260 640 1290M340 50L290 80M550 1210L500 1250 490 1290"/></g>
          <g transform="translate(1640 240) scale(.33333)"><path d="M0 250L80 200 140 220 190 270 300 300 360 350 400 430 440 450 480 430 560 430 600 410 640 440 690 380 780 345M440 460L420 510 360 590 260 580M240 590L260 680 290 770 230 820 190 790M235 820L235 890 205 960 210 1000 260 1060M100 790L160 820M530 660L540 600 620 620 640 690 780 740 820 830 850 920 860 1000 910 1050 920 1180 1050 1260M640 1170L640 1290 680 1340M1110 820L1080 800 1020 820 980 880 1000 960 1040 1080 1010 1180 1010 1250M710 1340L840 1270 920 1230 1010 1240M845 1270L850 1370 890 1460M1130 50L1130 230 1190 410 1200 520 1250 630 1290 700M1220 710L1260 670M300 1170L350 1190 370 1240 430 1180 440 1140 530 1160M160 160L190 210 260 290M385 170L390 220 370 280"/></g>
          <g transform="translate(2060 240) scale(.33333)"><path d="M315 50L360 100 480 125 600 170 720 178M650 50L800 150M790 150L790 50M800 145L870 135 960 145 1040 130 1140 120 1220 90 1245 50M1160 95L1230 110 1210 190 1280 240 1270 360 1230 450 1220 520M825 210L860 265M820 200L900 180 1000 180 1040 200 1160 210 1230 235 1317 250M570 250L640 230 680 180M1150 550L1150 700M0 710L40 730 30 810 60 900 95 940M140 960L200 990 270 1000 290 1030 340 1000 400 980 460 910 530 900 610 870 660 810 760 850 770 940 830 950 870 940 880 910 1090 915 1160 915 1160 960 1280 1030 1317 1025"/></g>
        </g>
        <g class="road motorway" filter="url(#wiggle)">
          <g transform="translate(340 240) scale(.34439 .33333)"><path d="M315 48L350 125 400 130 450 190 485 235 600 275 620 310 680 335 740 345 800 400 830 450 840 500 890 600 960 700 1090 780 1160 830 1230 825 1310 815 1400 860 1568 940M1160 830L1070 860 980 870 890 900 830 930 770 960 700 940 640 960 540 955 510 910M570 955L560 1010 530 1050 540 1110 500 1170 420 1165 380 1120 300 1010 230 940 140 850 130 780 60 700M240 980L260 1070M280 1070L400 1045 480 1070M170 1120L280 1080M370 1190L440 1195 540 1250 620 1290 740 1280 860 1340 900 1400 950 1488M860 1285L930 1275 1000 1285M350 1190L300 1170M200 1100L370 1160"/></g>
          <g transform="translate(860 240) scale(.34439 .33333)"><path d="M0 890L30 930 75 950 80 1040 115 1140 115 1200 145 1290 200 1295M1520 1190L1460 1200 1470 1260 1465 1370"/></g>
          <g transform="translate(1200 240) scale(.33333)"><path d="M670 435L710 435 760 400 850 350 900 280 960 230 1030 220 1075 180M605 520L605 610M700 790L770 850 800 930M550 1190L480 1200 500 1250M1205 50L1185 85M1360 285L1400 300 1440 290M1365 1275L1370 1310 1410 1340"/></g>
          <g transform="translate(1640 240) scale(.33333)"><path d="M125 50L150 120 180 190M400 50L395 200 370 290 440 320 510 340 570 410 650 450M0 290H50L80 300 190 285 200 235 240 235 300 250 305 290 350 320 400 370 410 430 460 490 470 530 540 600 600 620 660 700 720 710 800 790 830 880 880 950 890 1010 910 1070M370 290L355 330 390 400 430 440M540 600L580 600M245 1070L255 1150M50 1275L60 1310 150 1380 200 1430 240 1480M440 1470L600 1450 660 1420 680 1370M720 1340L780 1300 830 1320 880 1320 960 1270 1060 1250M1010 1225H1110L1130 1210 1260 1230 1350 1225M1150 60L1125 200 1150 290 1200 500 1230 590 1300 720 1290 800 1350 910M1080 1220L1150 1110 1170 1060 1240 1000 1350 940M880 1320L865 1400 890 1450M700 1340L640 1410"/></g>
          <g transform="translate(2060 240) scale(.33333)"><path d="M485 48L620 120 750 130 850 115 960 120 1070 135 1130 110 1220 50M1065 135L1120 180 1200 230 1280 270 1317 290M0 645L40 730 30 800 60 880 95 940 0 970M0 1225L180 1235 240 1180 310 1150 400 1155 520 1090 560 1090 610 1035 700 1030 760 1000 810 950 870 955 930 920 1100 920M1180 940L1280 1030 1317 1085"/></g>
        </g>

        <!-- national and maritime boundaries -->
        <g class="sea-border">
          <g transform="translate(340 240) scale(.34439 .33333)"><path d="M575 48L645 102 800 48M1140 48Q1160 85 1147 153L1190 167 1250 192 1310 230 1350 267Q1380 305 1382 340L1393 420 1400 500 1428 665 1480 695 1520 717 1570 740M1147 60Q1180 120 1260 137Q1320 155 1380 136Q1445 100 1457 48M55 1422L110 1460 165 1488"/></g>
          <g transform="translate(860 240) scale(.34439 .33333)"><path d="M0 715L60 740 140 762 190 793 240 808 340 862 420 925 470 980 510 1012 580 1038 640 1073 720 1100 770 1130 810 1165 880 1260 1000 1392Q1040 1430 1060 1488M810 48L860 85 970 148 1020 195 1075 223 1130 275 1152 312Q1160 370 1200 420Q1240 455 1307 487L1330 505M948 48L915 122M1418 388L1330 505Q1310 560 1286 690L1298 810 1308 900 1296 990 1280 1100 1240 1250Q1210 1360 1228 1410L1247 1488"/></g>
          <g transform="translate(2060 240) scale(.33333)"><path d="M295 1222L350 1248Q420 1275 490 1245L560 1200Q630 1175 628 1130Q635 1100 660 1102L680 1125Q615 1165 617 1240Q615 1310 675 1335Q720 1395 780 1370Q800 1350 850 1340Q885 1310 872 1240V1165L910 1112 950 1108 980 1085 1050 1112 1110 1112 1210 1160 1270 1158 1317 1168M295 1222L340 1270Q410 1310 405 1345L440 1375 460 1410Q550 1430 585 1488M405 1345L382 1362Q370 1410 395 1440L400 1488M1317 1320Q1240 1285 1160 1330Q1095 1370 1145 1430L1215 1488M1270 1488L1317 1480"/></g>
          <g transform="translate(1640 240) scale(.33333)"><path d="M960 1420Q970 1415 985 1450L998 1488M960 1420L975 1488"/></g>
        </g>
        <g class="border" filter="url(#wiggle)">
          <g transform="translate(1200 240) scale(.33333)"><path class="dark" d="M460 50L435 110 430 175 455 205 445 290 430 340 443 388M1090 180L1095 220 1130 300 1105 330 1110 375 1160 370 1205 340 1200 240 1245 215 1280 180 1340 170 1395 125 1430 150M1110 375L1070 470 1085 580M1060 760L1090 880 1110 940 1155 945 1188 1070 1230 1075 1250 1050 1320 1070 1325 1170 1360 1240 1360 1300"/><path d="M980 50L1065 90 1090 180M1085 585L1040 610 1065 700 1055 760 1090 860M1360 1300L1300 1390 1245 1385 1210 1440 1205 1488M1325 1110H1410L1440 1100"/></g>
          <g transform="translate(1640 240) scale(.33333)"><path class="dark" d="M0 175L75 125 110 150 130 200M150 1105L250 1065M1300 740L1290 715 1240 725 1225 770 1070 760"/><path d="M130 205H180L190 150 230 95 260 70 310 85 395 95 440 70 480 50 560 55 640 50M320 50L335 90M760 50L810 110 840 160 910 210 960 240 1030 260 1045 340 1090 440 1120 480 1085 540 1085 640 1080 750 1000 760 975 770 965 880 940 900 910 870 900 905 770 905 735 910 735 880 670 885 640 910 600 895 530 915 500 970 460 1010 445 1055 385 1050 370 1080 325 1100 290 1070 240 1070 200 1095 150 1100 90 1110H0M1300 740L1350 710M0 1185L45 1250 40 1320 0 1350"/></g>
          <g transform="translate(2060 240) scale(.33333)"><path d="M0 730L40 735 60 715 130 712 190 730 205 712 265 712 280 690 335 680 345 655 375 685 425 670 430 610 490 630 510 605 535 590 560 630 640 620 680 595 720 690 790 705 835 750 840 715 890 710 1000 760 1060 800 1075 830 1140 825 1230 800 1240 775 1317 785"/></g>
        </g>

        <!-- place names -->
        <g class="labels">
          <g transform="translate(340 240) scale(.34439 .33333)">
            <text x="435" y="611">Campobasso</text><text x="902" y="682">Foggia</text><text x="1295" y="783">Barletta</text><text x="1299" y="852">Andria</text><text x="500" y="922">Benevento</text><text x="263" y="957">Caserta</text><text x="192" y="1050">Giugliano</text><text x="192" y="1087">in Campania</text><text class="big" x="218" y="1140">Napoli</text><text x="503" y="1078">Avellino</text><text x="487" y="1247">Salerno</text><text x="1039" y="1277">Potenza</text><text x="1464" y="1256">Matera</text>
            <g class="area"><text x="417" y="494">Molise</text><text x="569" y="1196">Campania</text><text x="1211" y="1361">Basilicata</text></g>
            <g class="green"><text x="1055" y="459">Parco Nazionale</text><text x="1055" y="495">del Gargano</text><text x="1344" y="998">Parco Nazionale</text><text x="1344" y="1034">dell'Alta</text><text x="1344" y="1070">Murgia</text><text x="820" y="1459">Parco Nazionale</text><text x="815" y="1495">Cilento</text><text x="130" y="234">Parco Nazionale</text><text x="133" y="270">della Majella</text></g>
          </g>
          <g transform="translate(860 240) scale(.34439 .33333)"><text class="big" x="90" y="928">Bari</text><text x="662" y="1277">Brindisi</text><text x="290" y="1397">Taranto</text><text x="782" y="1479">Lecce</text><text class="it" x="64" y="1106">Puglia</text></g>
          <g transform="translate(1200 240) scale(.33333)">
            <text x="153" y="75">Budva</text><text x="292" y="215">Bar</text><text x="519" y="237">Shkodër</text><text x="483" y="789">Durrës</text><text class="big" x="686" y="783">Tiranë</text><text x="545" y="886">Kavajë</text><text class="country" x="714" y="899">Shqipëria</text><text x="625" y="1062">Lushnjë</text><text x="544" y="1214">Fier</text><text x="763" y="1231">Berat</text><text x="508" y="1398">Vlorë</text><text x="1145" y="1089">Pogradec</text><text x="1210" y="1294">Korçë</text><text x="1224" y="932">Охрид</text><text x="1309" y="646">Кичево</text><text x="1317" y="281">Тетово</text>
            <g class="area"><text x="789" y="294">Shqipëria</text><text x="789" y="334">Veriore</text><text x="860" y="1449">Shqipëria</text><text x="860" y="1489">Jugore</text><text x="1254" y="377">Полошки</text><text x="1254" y="417">СР</text><text x="1240" y="720">Југозападен</text><text x="1240" y="760">СР</text></g>
            <g class="green"><text x="1156" y="499">Национален</text><text x="1156" y="535">Парк Маврово</text></g>
          </g>
          <g transform="translate(1640 240) scale(.33333)">
            <text x="933" y="80">Кюстендил</text><text x="1154" y="280">Благоевград</text><text class="big" x="247" y="297">Скопје</text><text x="433" y="493">Велес</text><text x="663" y="479">Штип</text><text class="country" x="421" y="546">Северна</text><text class="country" x="421" y="596">Македонија</text><text x="564" y="702">Кавадарци</text><text x="314" y="767">Прилеп</text><text x="192" y="993">Битола</text><text x="832" y="919">Гевгелија</text><text x="1035" y="1023">Κιλκίς</text><text x="238" y="1175">Φλώρινα</text><text x="587" y="1161">Έδεσσα</text><text x="784" y="1167">Γιαννιτσά</text><text x="155" y="1362">Καστοριά</text><text x="669" y="1362">Βέροια</text>
            <g class="area"><text x="560" y="144">Североисточен</text><text x="560" y="184">СР</text><text x="844" y="386">Источен</text><text x="844" y="425">СР</text><text x="917" y="671">Југоисточен</text><text x="917" y="710">СР</text><text x="262" y="830">Пелагониски</text><text x="262" y="869">СР</text><text x="1152" y="1106">Αποκεντρωμένη</text><text x="1152" y="1146">Διοίκηση</text><text x="1152" y="1186">Μακεδονίας</text><text x="1152" y="1226">- Θράκης</text></g>
            <g class="upright"><text x="253" y="1424">Περιφέρεια</text><text x="253" y="1460">Δυτικής</text><text x="253" y="1495">Μακεδονίας</text></g>
            <g class="green"><text x="1164" y="793">Υγρότοπος</text><text x="1164" y="829">Λίμνης</text><text x="1164" y="865">Κερκίνης</text></g>
          </g>
          <g transform="translate(2060 240) scale(.33333)"><text x="571" y="149">Пазарджик</text><text class="big" x="800" y="186">Пловдив</text><text x="1239" y="335">Хасково</text><text x="1139" y="549">Кърджали</text><text x="773" y="597">Смолян</text><text x="470" y="909">Δράμα</text><text x="874" y="917">Ξάνθη</text><text x="1156" y="935">Κομοτηνή</text><text x="144" y="952">Σέρρες</text><text x="615" y="1065">Καβάλα</text><text class="cut" x="1297" y="1131">Α</text><text class="green" x="152" y="211">Рила</text></g>
        </g>
        <use href="#marker" x="1364.500" y="490.500"/><use href="#marker" x="1439.500" y="490.500"/><use href="#marker" x="1428.500" y="498.500"/>
      </svg>
      <div class="zoomer"><span>+</span><span>−</span></div>
      <div class="search"><span>Search Location</span><span class="x">✖</span></div>
    </section>
    <button class="fab"><svg viewBox="0 0 26 26"><path d="M13 1.500V24.500M1.500 13H24.500" stroke="#fff" stroke-width="3.200" stroke-linecap="round"/></svg></button>
  </main>
</div>
<div class="taskbar"><i></i></div>
</body>
</html>
```
FILE: styles.css
```css
* { box-sizing: border-box; }
body { margin: 0; width: 2559px; height: 1338px; overflow: hidden; display: flex; flex-direction: column; background: #fff; color: #212529; font-family: "Poppins", "Inter", sans-serif; }
.topline { height: 3px; background: #f0f0f0; border-bottom: 1px solid #d2d8dd; }
.app { flex: 1; display: flex; min-height: 0; }
.sidebar { width: 299px; display: flex; flex-direction: column; background: #fdf8ec; }
.brand { height: 154px; display: flex; padding-left: 99px; }
.logo { width: 100px; height: 100px; display: block; }
.logo-text { font: bold 12px "Liberation Serif", serif; fill: #3a2c28; letter-spacing: -.42px; }
.logo-year { font: bold 14px "Liberation Serif", serif; fill: #3a2c28; letter-spacing: .5px; }
.menu { background: #fff4e8; padding-bottom: 4px; display: flex; flex-direction: column; gap: 8px; }
.item { height: 40px; padding-left: 23px; display: flex; align-items: center; gap: 10px; font-size: 16px; letter-spacing: .08px; white-space: nowrap; }
.item span { line-height: 24px; padding-bottom: 1px; }
.item svg { width: 20px; height: 20px; fill: #212529; flex: none; }
.item .exit { fill: none; stroke: #f00; stroke-width: 1.1; }
.active { background: #db7b00; color: #fff; font-weight: 500; }
.signout { margin-top: auto; height: 50px; background: #fff4e8; padding-top: 4px; }
.collapse { height: 48px; border: 0; background: #db7b00; padding: 0 2px 0 0; display: flex; justify-content: center; align-items: center; }
.collapse svg { width: 12px; height: 14px; }
.main { flex: 1; padding: 36px 50px 50px; display: flex; flex-direction: column; }
h1 { margin: 0 0 22px; height: 35px; line-height: 42px; font-size: 28.8px; font-weight: 400; }
.cards { display: flex; gap: 25px; }
.card { width: 350px; height: 80px; border: 1px solid; border-radius: 5px; display: flex; padding: 20px 10px 0 10px; background: #fff; }
.green-card { border-color: #4bb04f; box-shadow: 0 3px 5px #4bb04f; }
.blue-card { border-color: #3f51b5; box-shadow: 0 3px 5px #3f51b5; }
.purple-card { border-color: #9c27b0; box-shadow: 0 3px 5px #9c27b0; }
.card .pin { width: 30px; height: 30px; margin-top: 1px; fill: #242424; }
.info { flex: 1; display: flex; flex-direction: column; margin-left: 10px; margin-top: -3px; }
.info b { font-size: 14px; line-height: 22px; font-weight: 500; letter-spacing: .12px; color: #242424; }
.info span { font-size: 14px; line-height: 22px; font-weight: 300; color: #222; }
.tools { display: flex; gap: 8px; margin-top: -1px; }
.tools svg { width: 18px; height: 18px; fill: #242424; }
.mapbox { position: relative; margin-top: 70px; padding: 10px; height: 500px; border-radius: 5px; background: #fdf8ec; }
.map { display: block; width: 2140px; height: 480px; }
.zoomer { position: absolute; left: 20px; top: 20px; width: 34px; border: 2px solid rgba(0,0,0,.2); border-radius: 4px; background: #fff; background-clip: padding-box; }
.zoomer span { display: block; height: 30px; font: bold 22px/30px "Liberation Sans", sans-serif; text-align: center; color: #000; }
.zoomer span:first-child { border-bottom: 1px solid #ccc; }
.search { position: absolute; left: 880px; top: 20px; width: 400px; height: 34px; padding: 0 8px 0 16px; border: 2px solid rgba(0,0,0,.2); border-radius: 4px; background: #fff; background-clip: padding-box; display: flex; align-items: center; justify-content: space-between; font-size: 12px; color: #757575; }
.search .x { color: #000; font: 9px "DejaVu Sans", sans-serif; }
.fab { margin-top: auto; align-self: flex-end; width: 50px; height: 50px; border: 0; border-radius: 6px; background: #db7b00; padding: 0; display: flex; justify-content: center; align-items: center; }
.fab svg { width: 26px; height: 26px; }
.taskbar { height: 2px; background: #1b2922; }
.taskbar i { display: block; width: 160px; height: 2px; margin-left: 98px; background: #555; }

.map path { vector-effect: non-scaling-stroke; }
.park { fill: none; stroke: #8cc78a; stroke-width: 1; opacity: .75; }
.map .park path, .map .river path, .map .road path, .map .region path { fill: none; }
.river { stroke: #a5d2e0; stroke-width: .9; }
.ferry path { fill: none; stroke: #7f9df0; stroke-width: .8; stroke-dasharray: 5 4; }
.region { stroke: #b49cbc; stroke-width: 1.1; opacity: .85; }
.road { stroke-linejoin: round; }
.yellow { stroke: #fbc47e; stroke-width: 1; }
.orange { stroke: #f99a7e; stroke-width: 1; }
.rail { stroke: #807b78; stroke-width: .8; }
.motorway { stroke: #e8607f; stroke-width: 1.1; }
.sea-border path { fill: none; stroke: #9a8fb0; stroke-width: 2.3; }
.border path { fill: none; stroke: #a48da8; stroke-width: 2.6; stroke-linejoin: round; }
.border .dark { stroke: #858585; stroke-width: 2; }
.labels { font: 30px "Noto Sans", sans-serif; fill: #303030; text-anchor: middle; }
.labels text { paint-order: stroke; stroke: #fff; stroke-opacity: .75; stroke-width: 5px; stroke-linejoin: round; }
.labels .big { font-size: 38px; }
.labels .country { font-size: 39px; fill: #7d4f7d; letter-spacing: 1px; }
.labels .area, .labels .it { font-size: 32px; font-style: italic; fill: #8a5f8c; }
.labels .upright { fill: #a57aa5; }
.labels .green { font-style: italic; fill: #228b22; }
.labels .cut { text-anchor: start; }
```
